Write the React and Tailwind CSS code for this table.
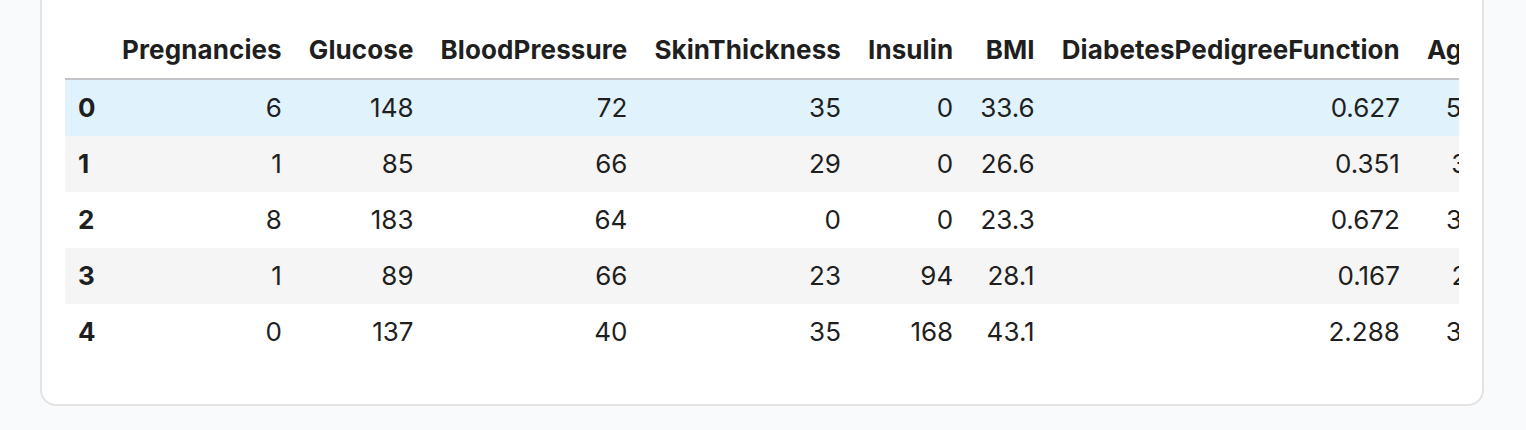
import React from "react";

const cols = ["Pregnancies","Glucose","BloodPressure","SkinThickness","Insulin","BMI","DiabetesPedigreeFunction","Age"];
const rows = [
  ["6","148","72","35","0","33.6","0.627","50"],
  ["1","85","66","29","0","26.6","0.351","31"],
  ["8","183","64","0","0","23.3","0.672","32"],
  ["1","89","66","23","94","28.1","0.167","21"],
  ["0","137","40","35","168","43.1","2.288","33"],
];

export default function App() {
  return (
    <div className="w-[1526px] h-[430px] bg-[#f8fafc] overflow-hidden" style={{fontFamily: "Inter, 'Noto Sans', sans-serif"}}>
      <div className="ml-[40px] mr-[42px] -mt-[20px] bg-white border-2 border-[#e3e3e3] rounded-[16px] px-[23px] pt-[40px] pb-[44px] text-[#1f1f1f]">
        <div className="overflow-hidden">
          <table className="border-collapse text-[26px] leading-[56px]">
            <thead>
              <tr className="border-b-2 border-[#c4c4c8]">
                <th className="px-[13px]"></th>
                {cols.map(c => (
                  <th key={c} className="px-[13.5px] text-right font-bold tracking-[0.1px] whitespace-nowrap">{c}</th>
                ))}
              </tr>
            </thead>
            <tbody>
              {rows.map((r, i) => (
                <tr key={i} className={i === 0 ? "bg-[#e0f2fc]" : i % 2 === 1 ? "bg-[#f5f5f5]" : "bg-white"}>
                  <th className="px-[13px] text-left font-bold">{i}</th>
                  {r.map((v, j) => (
                    <td key={j} className="px-[13.5px] text-right whitespace-nowrap">{v}</td>
                  ))}
                </tr>
              ))}
            </tbody>
          </table>
        </div>
      </div>
    </div>
  );
}
